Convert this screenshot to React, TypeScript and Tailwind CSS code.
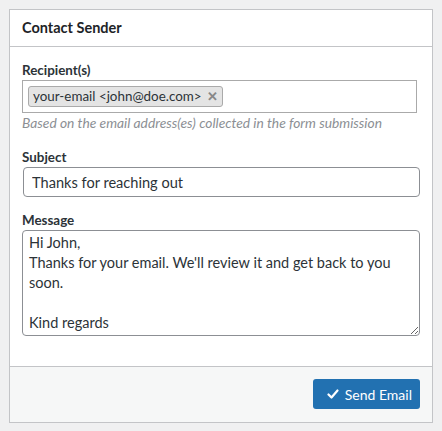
import { useState } from "react";

const font = { fontFamily: "Lato, 'Liberation Sans', sans-serif" };

function Chip({ label }: { label: string }) {
  return (
    <span className="flex h-[21px] items-center gap-[5px] rounded-[3px] border border-[#aaaaaa] bg-[#e4e4e4] pl-[4px] pr-[4px] text-[13.4px] text-[#2c3338]">
      {label}
      <span className="text-[13px] font-bold leading-none text-[#888888]">✕</span>
    </span>
  );
}

export default function App() {
  const [subject, setSubject] = useState("Thanks for reaching out");
  const [message, setMessage] = useState(
    "Hi John,\nThanks for your email. We'll review it and get back to you soon.\n\nKind regards"
  );

  return (
    <div className="min-h-[431px] bg-[#f0f0f1] p-[9px]" style={font}>
      <div className="flex flex-col border border-[#c3c4c7] bg-white">
        <div className="flex h-[37px] items-center border-b border-[#c3c4c7] px-3">
          <h2 className="text-[14.5px] font-bold text-[#1d2327]">Contact Sender</h2>
        </div>

        <div className="flex flex-col px-3 pt-[14px] pb-[30px]">
          <label className="mb-[1px] text-[13.4px] font-bold leading-[18px] text-[#2c3338]">
            Recipient(s)
          </label>
          <div className="flex h-[33px] w-[395px] items-center border border-[#aaaaaa] px-[5px]">
            <Chip label="your-email <john@doe.com>" />
          </div>
          <p className="mt-[1px] text-[13.8px] italic leading-[18px] text-[#8c8f94]">
            Based on the email address(es) collected in the form submission
          </p>

          <label className="mt-[16px] mb-[1px] text-[13.4px] font-bold leading-[18px] text-[#2c3338]">
            Subject
          </label>
          <input
            value={subject}
            onChange={(e) => setSubject(e.target.value)}
            className="ml-[1px] h-[30px] rounded-[4px] border border-[#8c8f94] px-[8px] text-[14.6px] text-[#2c3338] outline-none"
            style={font}
          />

          <label className="mt-[14px] mb-[1px] text-[13.4px] font-bold leading-[18px] text-[#2c3338]">
            Message
          </label>
          <textarea
            value={message}
            onChange={(e) => setMessage(e.target.value)}
            className="h-[106px] resize-y rounded-[4px] border border-[#8c8f94] px-[6px] pt-[2px] text-[14.5px] leading-[20px] text-[#2c3338] outline-none"
            style={font}
          />
        </div>

        <div className="flex justify-end border-t border-[#c3c4c7] bg-[#f6f7f7] px-3 pt-3 pb-[13px]">
          <button className="flex h-[30px] items-center gap-[6px] rounded-[3px] bg-[#2271b1] pl-[14px] pr-[8px] text-[14px] text-white">
            <svg width="12" height="12" viewBox="0 0 12 12" fill="none">
              <path d="M1.5 6.5 L4.5 9.5 L10.5 2.5" stroke="white" strokeWidth="2.2" strokeLinecap="round" strokeLinejoin="round" />
            </svg>
            Send Email
          </button>
        </div>
      </div>
    </div>
  );
}
